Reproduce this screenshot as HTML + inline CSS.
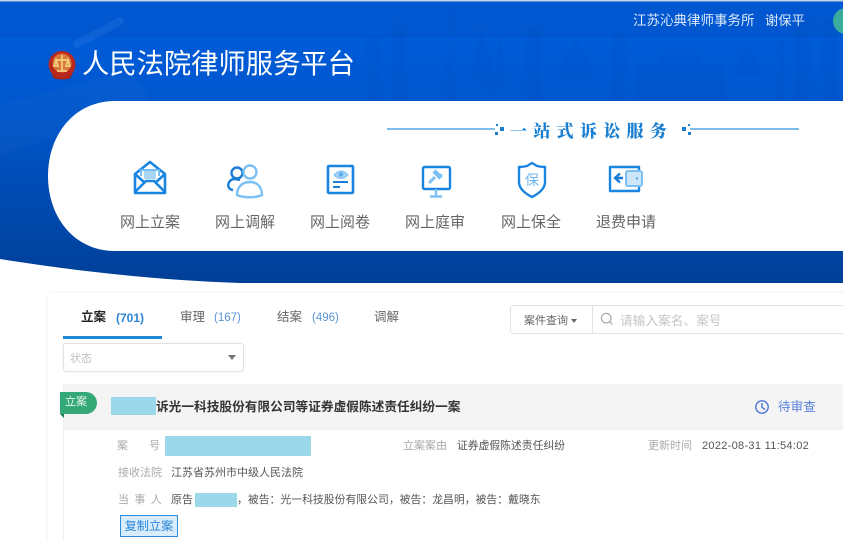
<!DOCTYPE html>
<html lang="zh"><head><meta charset="utf-8"><title>人民法院律师服务平台</title>
<style>
*{box-sizing:border-box}
html,body{margin:0;padding:0;width:843px;height:541px;overflow:hidden}
body{background:#fff;font-family:"Liberation Sans","Noto Sans CJK SC",sans-serif;color:#555}
#w{position:relative;width:843px;height:541px;overflow:hidden;filter:blur(.3px)}
.a{position:absolute;white-space:nowrap}
.t{font-size:11px;line-height:16px}
.lab{color:#aaa}
.nav{font-size:15px;line-height:20px;color:#666;width:80px;text-align:center;top:213px}
.ms{background:#9bd8ea}
</style></head><body><div id="w">
<svg class="a" style="left:0;top:0" width="843" height="290" viewBox="0 0 843 290">
<defs><linearGradient id="g" x1="0" y1="0" x2="0" y2="1"><stop offset="0" stop-color="#005ede"/><stop offset=".4" stop-color="#0056cc"/><stop offset="1" stop-color="#003f97"/></linearGradient></defs>
<rect width="843" height="1.5" fill="#c5d2e4"/>
<path d="M0 1.5H843V283H240C150 280 70 270 0 259Z" fill="url(#g)"/>
<rect y="1.5" width="843" height="36" fill="#0050c0" opacity=".4"/>
<path d="M77 44L120 21" stroke="#5a97ea" stroke-width="8" stroke-linecap="round" opacity=".16"/>
<path d="M0 105L110 75Q150 75 148 101L60 135L0 155Z" fill="#3a7ad0" opacity=".08"/>
<g fill="#004cb8" opacity=".17">
<rect x="366" y="36" width="14" height="65"/><rect x="392" y="25" width="14" height="76"/><path d="M398 22h2v10h-2z"/>
<rect x="446" y="60" width="8" height="41"/><rect x="449" y="8" width="2" height="60"/>
<path d="M472 75L480 22L486 45L495 75L500 35L505 75L515 75L490 92L472 75Z"/><rect x="526" y="28" width="15" height="73"/>
<path d="M552 78L575 40L600 78Z"/><rect x="612" y="33" width="14" height="68"/>
<path d="M637 65H725V101H637ZM660 55H700V65H660Z"/><path d="M735 75L745 45L765 75Z"/>
<rect x="778" y="40" width="6" height="61"/><rect x="795" y="15" width="15" height="86"/><rect x="822" y="20" width="15" height="81"/>
</g>
<path d="M843 101H115C74 101 48 135 48 176C48 217 74 251 115 251H843Z" fill="#fff"/>
</svg>
<svg class="a" style="left:47px;top:49px" width="30" height="32" viewBox="0 0 30 32">
<circle cx="15" cy="15.5" r="13.5" fill="#b8281c"/><circle cx="15" cy="14" r="9.5" fill="#d9783a"/>
<path d="M15 6V21M8 11H22M9 11L7 17H11ZM21 11L19 17H23ZM10 22H20" stroke="#f3cf7c" stroke-width="1.7" fill="none"/>
<path d="M4 24Q15 33 26 24L23 29.5Q15 31.5 7 29.5Z" fill="#a8231a"/>
</svg>
<div class="a" style="left:82px;top:47px;font-size:27.3px;line-height:34px;color:#fff">人民法院律师服务平台</div>
<div class="a" style="left:633px;top:12px;font-size:13.5px;line-height:17px;color:#dce9fb">江苏沁典律师事务所</div>
<div class="a" style="left:765px;top:12px;font-size:13.3px;line-height:17px;color:#dce9fb">谢保平</div>
<div class="a" style="left:833px;top:8px;width:26px;height:26px;border-radius:50%;background:#38ab9c"></div>

<div class="a" style="left:387px;top:128px;width:108px;height:2px;background:#7fbde9"></div>
<div class="a" style="left:690px;top:128px;width:109px;height:2px;background:#7fbde9"></div>
<svg class="a" style="left:494px;top:123px" width="200" height="14"><g fill="#1a7fd0"><rect x="6" y="4" width="4" height="4"/><rect x="1" y="9" width="3" height="3"/><rect x="2" y="1" width="2" height="2"/><rect x="188" y="4" width="4" height="4"/><rect x="194" y="9" width="3" height="3"/><rect x="194" y="1" width="2" height="2"/></g></svg>
<div class="a" style="left:510px;top:119px;font-family:'Noto Serif CJK SC',serif;font-weight:900;font-size:17px;line-height:22px;letter-spacing:6.3px;color:#1a7fd0">一站式诉讼服务</div>

<svg class="a" style="left:133px;top:160px" width="34" height="36" viewBox="0 0 34 36" fill="none" stroke="#1a85e0" stroke-width="2.6" stroke-linejoin="round">
<path d="M2 14L17 2L32 14V33H2Z"/><path d="M2 32L13 21H21L32 32M2 14L12 23M32 14L22 23"/><path d="M8 16V10H26V16" stroke="#79bdf0" stroke-width="2"/><rect x="11" y="11" width="12" height="8" fill="#a9d6f6" stroke="none"/>
</svg>
<svg class="a" style="left:226px;top:163px" width="40" height="36" viewBox="0 0 40 36" fill="none" stroke-width="2.4">
<g stroke="#1a7ed8"><circle cx="11" cy="10" r="5.5"/><path d="M7 27C0 26 1 17 8 16"/><path d="M8 16L14 17"/></g>
<g stroke="#7cc0f4"><circle cx="24" cy="9" r="6.5"/><path d="M11 32C11 24 16 19 24 19C32 19 36 25 36 32C30 35 17 35 11 32Z"/></g>
</svg>
<svg class="a" style="left:326px;top:164px" width="30" height="32" viewBox="0 0 30 32" fill="none">
<rect x="2" y="2" width="25" height="27" stroke="#1a85e0" stroke-width="2.6" rx="1"/>
<path d="M8 11Q15 3 22 11Q15 18 8 11Z" fill="#a8d5f5" stroke="#7cc0f4"/><circle cx="15" cy="10.5" r="2.3" fill="#5aaeea"/>
<path d="M7 18H22" stroke="#1a7ed8" stroke-width="2"/><path d="M7 23H14" stroke="#1a7ed8" stroke-width="2"/>
</svg>
<svg class="a" style="left:420px;top:164px" width="32" height="36" viewBox="0 0 32 36" fill="none">
<rect x="3" y="3" width="27" height="22" rx="1.5" stroke="#1a85e0" stroke-width="2.4"/>
<path d="M16 25V32M10 32.5H22" stroke="#7cc0f4" stroke-width="2.4"/>
<path d="M9 19L15 13" stroke="#7cc0f4" stroke-width="3"/><path d="M14 7L21 14" stroke="#7cc0f4" stroke-width="4.5"/><path d="M19 13L22 10" stroke="#7cc0f4" stroke-width="2"/>
</svg>
<svg class="a" style="left:516px;top:161px" width="32" height="38" viewBox="0 0 32 38" fill="none">
<path d="M16 2L21 5Q25 6 29 6V22Q28 30 16 36Q4 30 3 22V6Q7 6 11 5Z" stroke="#1a85e0" stroke-width="2.4" stroke-linejoin="round"/>
<text x="16" y="24" text-anchor="middle" font-size="14" fill="#6db7ee" stroke="none" font-family="Liberation Sans,Noto Sans CJK SC,sans-serif">保</text>
</svg>
<svg class="a" style="left:608px;top:164px" width="36" height="30" viewBox="0 0 36 30" fill="none">
<path d="M31 7V3H2V27H31V23" stroke="#1a85e0" stroke-width="2.4" stroke-linejoin="round"/>
<path d="M8 14H15M12 9.5L7 14L12 18.5" stroke="#1a7ed8" stroke-width="2.4"/>
<rect x="18" y="7" width="16" height="15" rx="2" fill="#cde6fa" stroke="#7cc0f4" stroke-width="2"/><circle cx="29" cy="14.5" r="1.2" fill="#5aaeea"/>
</svg>
<div class="a nav" style="left:110px">网上立案</div>
<div class="a nav" style="left:205px">网上调解</div>
<div class="a nav" style="left:300px">网上阅卷</div>
<div class="a nav" style="left:395px">网上庭审</div>
<div class="a nav" style="left:491px">网上保全</div>
<div class="a nav" style="left:586px">退费申请</div>

<div class="a" style="left:48px;top:293px;width:800px;height:248px;background:#fff;border-radius:4px;box-shadow:0 0 4px rgba(0,0,0,.09)"></div>
<div class="a" style="left:81px;top:309px;font-size:12.5px;line-height:17px;color:#222;font-weight:700">立案</div>
<div class="a" style="left:116px;top:310px;font-size:12px;line-height:16px;color:#2f84d6;font-weight:700">(701)</div>
<div class="a" style="left:180px;top:309px;font-size:12.5px;line-height:17px;color:#666">审理</div>
<div class="a" style="left:214px;top:310px;font-size:11.5px;line-height:16px;color:#5c94d6">(167)</div>
<div class="a" style="left:277px;top:309px;font-size:12.5px;line-height:17px;color:#666">结案</div>
<div class="a" style="left:312px;top:310px;font-size:11.5px;line-height:16px;color:#5c94d6">(496)</div>
<div class="a" style="left:374px;top:309px;font-size:12.5px;line-height:17px;color:#666">调解</div>
<div class="a" style="left:63px;top:336px;width:99px;height:3px;background:#1e88d8"></div>
<div class="a" style="left:63px;top:343px;width:181px;height:29px;border:1px solid #e2e2e2;border-radius:3px;box-shadow:0 0 2px rgba(0,0,0,.06)"></div>
<div class="a t" style="left:70px;top:351px;color:#c0c0c0">状态</div>
<div class="a" style="left:228px;top:355px;border-left:4.5px solid transparent;border-right:4.5px solid transparent;border-top:5px solid #777"></div>

<div class="a" style="left:510px;top:305px;width:340px;height:29px;border:1px solid #e3e3e3;border-radius:3px"></div>
<div class="a" style="left:592px;top:305px;width:1px;height:29px;background:#e3e3e3"></div>
<div class="a t" style="left:524px;top:313px;color:#666">案件查询</div>
<div class="a" style="left:571px;top:319px;border-left:3.5px solid transparent;border-right:3.5px solid transparent;border-top:4px solid #666"></div>
<svg class="a" style="left:600px;top:312px" width="14" height="14" fill="none" stroke="#aaa" stroke-width="1.2"><circle cx="6.2" cy="6.2" r="4.8"/><path d="M9.7 9.7L12.5 12.5"/></svg>
<div class="a" style="left:620px;top:313px;font-size:12.7px;line-height:16px;color:#c4c4c4">请输入案名、案号</div>

<div class="a" style="left:64px;top:384px;width:790px;height:46px;background:#f4f4f4"></div>
<div class="a" style="left:63px;top:384px;width:1px;height:157px;background:#eee"></div>
<div class="a" style="left:60px;top:392px;width:37px;height:22px;background:#35a877;border-radius:0 11px 11px 0;color:#e8f6ef;font-size:11px;line-height:20px;padding-left:5px">立案</div>
<div class="a" style="left:60px;top:414px;border-top:4px solid #1f7a54;border-left:4px solid transparent"></div>
<div class="a ms" style="left:111px;top:397px;width:45px;height:18px"></div>
<div class="a" style="left:156px;top:398px;font-size:12.7px;line-height:18px;color:#333;font-weight:700">诉光一科技股份有限公司等证券虚假陈述责任纠纷一案</div>
<svg class="a" style="left:754px;top:399px" width="16" height="16" fill="none" stroke="#4a76d8" stroke-width="1.4"><circle cx="8" cy="8" r="6.2"/><path d="M8 4V8.3L11 10.5"/></svg>
<div class="a" style="left:778px;top:399px;font-size:12.6px;line-height:17px;color:#5a82dc">待审查</div>

<div class="a t lab" style="left:117px;top:438px">案</div>
<div class="a t lab" style="left:149px;top:438px">号</div>
<div class="a ms" style="left:165px;top:436px;width:146px;height:20px"></div>
<div class="a t lab" style="left:403px;top:438px">立案案由</div>
<div class="a t" style="left:457px;top:438px;font-size:10.8px;color:#555">证券虚假陈述责任纠纷</div>
<div class="a t lab" style="left:648px;top:438px">更新时间</div>
<div class="a t" style="left:702px;top:438px;color:#555;letter-spacing:.3px">2022-08-31 11:54:02</div>
<div class="a t lab" style="left:118px;top:465px">接收法院</div>
<div class="a t" style="left:171px;top:465px;color:#555">江苏省苏州市中级人民法院</div>
<div class="a t lab" style="left:118px;top:492px;letter-spacing:5.4px">当事人</div>
<div class="a t" style="left:171px;top:492px;color:#555">原告：</div>
<div class="a ms" style="left:195px;top:493px;width:42px;height:14px"></div>
<div class="a t" style="left:237px;top:492px;color:#555;font-size:10.85px">，被告：光一科技股份有限公司，被告：龙昌明，被告：戴晓东</div>
<div class="a" style="left:120px;top:515px;width:58px;height:22px;background:#d8ecfb;border:1px solid #2a8bdc;color:#2a86d8;font-size:12.2px;line-height:20px;text-align:center">复制立案</div>
</div></body></html>
